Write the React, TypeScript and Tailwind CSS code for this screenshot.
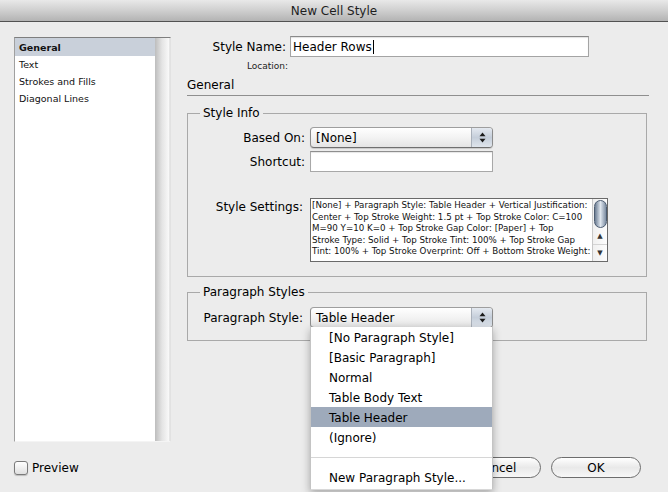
import React from "react";

function Arrows() {
  return (
    <svg width="7" height="11" viewBox="0 0 7 11">
      <path d="M3.5 0.5 L6.5 4.2 L0.5 4.2 Z" fill="#1a1a1a" />
      <path d="M3.5 10.5 L6.5 6.8 L0.5 6.8 Z" fill="#1a1a1a" />
    </svg>
  );
}

function PopUp({ label }: { label: string }) {
  return (
    <div className="w-[183px] h-[21px] flex rounded-[4px] border border-[#8c8c8c] border-t-[#9e9e9e] border-b-[#6f6f6f] bg-gradient-to-b from-[#ffffff] via-[#f3f3f3] to-[#e4e4e4] shadow-[0_1px_1px_rgba(0,0,0,0.15)] overflow-hidden">
      <div className="flex-1 flex items-center pl-[5px] text-[12px] text-black leading-none">{label}</div>
      <div className="w-[21px] border-l border-[#a9b0ba] bg-gradient-to-b from-[#e4e9f0] via-[#c5ceda] to-[#dfe5ec] flex items-center justify-center">
        <Arrows />
      </div>
    </div>
  );
}

const settingsLines = [
  "[None] + Paragraph Style: Table Header + Vertical Justification:",
  "Center + Top Stroke Weight: 1.5 pt + Top Stroke Color: C=100",
  "M=90 Y=10 K=0 + Top Stroke Gap Color: [Paper] + Top",
  "Stroke Type: Solid + Top Stroke Tint: 100% + Top Stroke Gap",
  "Tint: 100% + Top Stroke Overprint: Off + Bottom Stroke Weight:",
];

const menuItems = [
  "[No Paragraph Style]",
  "[Basic Paragraph]",
  "Normal",
  "Table Body Text",
  "Table Header",
  "(Ignore)",
];

export default function App() {
  return (
    <div className="w-[668px] h-[492px] bg-[#ececec] overflow-hidden relative flex flex-col font-['DejaVu_Sans',sans-serif] text-black">
      {/* title bar */}
      <div className="h-[22px] shrink-0 bg-gradient-to-b from-[#e9e9e9] via-[#cfcfcf] to-[#b3b3b3] border-b border-[#525252] flex items-center justify-center text-[12px] text-[#1e1e1e]">
        New Cell Style
      </div>

      <div className="flex h-[435px] shrink-0">
        {/* left list */}
        <div className="pl-[14px] pt-[15px] shrink-0">
          <div className="w-[157px] h-[405px] flex border border-[#a0a0a0] border-t-[#7e7e7e] border-r-[#e2e2e2] border-b-[#f4f4f4] bg-white">
            <div className="flex-1 flex flex-col text-[9.5px] leading-none text-[#111]">
              <div className="h-[18px] flex items-center pl-[4px] pt-[1px] bg-[#c9d0da] font-bold">General</div>
              <div className="h-[17px] flex items-center pl-[4px]">Text</div>
              <div className="h-[17px] flex items-center pl-[4px]">Strokes and Fills</div>
              <div className="h-[17px] flex items-center pl-[4px]">Diagonal Lines</div>
            </div>
            <div className="w-[15px] bg-gradient-to-r from-[#bdbdbd] via-[#e4e4e4] to-[#f9f9f9] border-r border-[#e6e6e6]" />
          </div>
        </div>

        {/* right column */}
        <div className="ml-[16px] w-[462px] flex flex-col">
          <div className="mt-[14px] flex items-center h-[21px]">
            <div className="w-[99px] text-right text-[12px]">Style Name:</div>
            <div className="ml-[4px] w-[299px] h-[21px] bg-white border border-[#a4a4a4] border-t-[#8a8a8a] shadow-[inset_0_1px_1px_rgba(0,0,0,0.12)] flex items-center pl-[2px] text-[12px]">
              Header Rows<span className="inline-block w-[1px] h-[14px] bg-black ml-[1px]" />
            </div>
          </div>
          <div className="mt-[4px] h-[12px] flex items-center">
            <div className="w-[101px] text-right text-[9px] text-[#222]">Location:</div>
          </div>
          <div className="mt-[5px] pb-[2px] leading-[15px] text-[12px] border-b border-[#8f8f8f]">General</div>

          {/* Style Info */}
          <fieldset className="mt-[9px] w-[460px] border border-[#a9a9a9] pb-[14px]">
            <legend className="ml-[12px] px-[3px] text-[12px] leading-[16px]">Style Info</legend>
            <div className="mt-[6px] grid grid-cols-[117px_auto] gap-x-[5px] items-center">
              <div className="text-right text-[12px]">Based On:</div>
              <PopUp label="[None]" />
              <div className="text-right text-[12px] mt-[3px]">Shortcut:</div>
              <div className="mt-[3px] w-[183px] h-[21px] bg-white border border-[#a8a8a8] border-t-[#8e8e8e] shadow-[inset_0_1px_1px_rgba(0,0,0,0.1)]" />
              <div className="self-start text-right text-[12px] mt-[26px] pr-[2px]">Style Settings:</div>
              <div className="mt-[26px] w-[298px] h-[64px] flex border border-[#6a6a6a] bg-white">
                <div className="flex-1 pl-[1px] pt-[1px] text-[8.7px] leading-[11.6px] text-[#111] whitespace-nowrap overflow-hidden">
                  {settingsLines.map((l) => (
                    <div key={l}>{l}</div>
                  ))}
                </div>
                <div className="w-[15px] border-l border-[#c8c8c8] bg-gradient-to-r from-[#f0f0f0] to-[#fdfdfd] flex flex-col items-center">
                  <div className="mt-[1px] w-[13px] h-[28px] rounded-full border border-[#4d5d72] bg-gradient-to-r from-[#6c7d93] via-[#dfe6ee] to-[#7d8da2]" />
                  <div className="flex-1" />
                  <div className="w-full h-[16px] flex items-center justify-center text-[7px] text-[#333] border-b border-[#d4d4d4]">▲</div>
                  <div className="w-full h-[16px] flex items-center justify-center text-[7px] text-[#333]">▼</div>
                </div>
              </div>
            </div>
          </fieldset>

          {/* Paragraph Styles */}
          <fieldset className="mt-[7px] w-[460px] border border-[#a9a9a9] pb-[12px]">
            <legend className="ml-[12px] px-[3px] text-[12px] leading-[16px]">Paragraph Styles</legend>
            <div className="mt-[7px] grid grid-cols-[117px_auto] gap-x-[5px] items-center">
              <div className="text-right text-[12px] pr-[2px]">Paragraph Style:</div>
              <PopUp label="Table Header" />
            </div>
          </fieldset>
        </div>
      </div>

      {/* bottom row */}
      <div className="h-[21px] shrink-0 flex items-center">
        <div className="ml-[14px] w-[14px] h-[14px] rounded-[3px] border border-[#7a7a7a] bg-gradient-to-b from-[#ffffff] to-[#e0e0e0] shadow-[0_1px_1px_rgba(0,0,0,0.2)]" />
        <div className="ml-[4px] text-[12px]">Preview</div>
        <div className="ml-auto w-[90px] h-[21px] rounded-full border border-[#6d6d6d] bg-gradient-to-b from-[#ffffff] via-[#e9e9e9] to-[#f7f7f7] flex items-center justify-center text-[12px]">
          Cancel
        </div>
        <div className="ml-[10px] mr-[27px] w-[90px] h-[21px] rounded-full border border-[#6d6d6d] bg-gradient-to-b from-[#ffffff] via-[#e9e9e9] to-[#f7f7f7] flex items-center justify-center text-[12px]">
          OK
        </div>
      </div>

      {/* open pop-up menu */}
      <div className="absolute left-[310px] top-[327px] w-[183px] h-[163px] bg-white border-x border-[#c4c4c4] border-b border-b-[#d8d8d8] shadow-[0_3px_8px_rgba(0,0,0,0.3)] flex flex-col text-[12px]">
        {menuItems.map((m) => (
          <div
            key={m}
            className={
              m === "Table Header"
                ? "h-[20px] flex items-center pl-[18px] pt-[1px] bg-[#9eaabb]"
                : "h-[20px] flex items-center pl-[18px] pt-[1px]"
            }
          >
            {m}
          </div>
        ))}
        <div className="h-[20px] flex items-center">
          <div className="w-full h-[1px] bg-[#d6d6d6]" />
        </div>
        <div className="h-[20px] flex items-center pl-[18px] pt-[1px]">New Paragraph Style...</div>
      </div>
    </div>
  );
}
